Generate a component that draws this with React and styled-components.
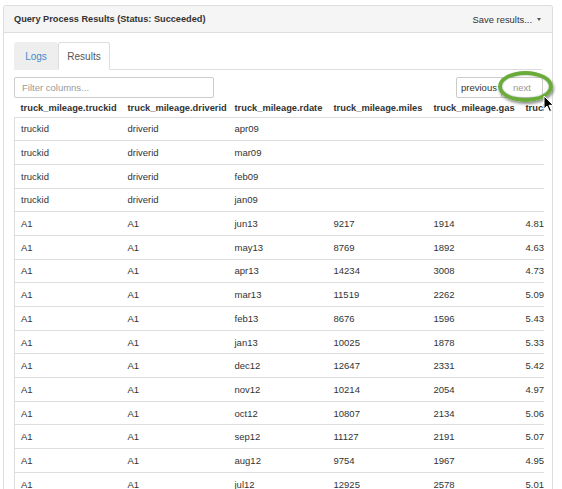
import React from "react";
import styled, { createGlobalStyle } from "styled-components";

const Global = createGlobalStyle`
  html, body { margin: 0; padding: 0; background: #fff; }
  body { font-family: "Liberation Sans", Arial, sans-serif; color: #333; overflow: hidden; }
  * { box-sizing: border-box; }
`;

const Panel = styled.div`
  margin: 5px 0 0 3px;
  width: 550px;
  height: 500px;
  border: 1px solid #ddd;
  border-bottom: none;
  border-radius: 3px 3px 0 0;
  background: #fff;
`;

const PanelHeader = styled.div`
  height: 27px;
  display: flex;
  align-items: center;
  justify-content: space-between;
  padding: 0 10px;
  background: #f5f5f5;
  border-bottom: 1px solid #ddd;
  border-radius: 3px 3px 0 0;
`;

const Title = styled.div`
  font-weight: bold;
  font-size: 9.2px;
  color: #333;
`;

const SaveMenu = styled.div`
  font-size: 9.4px;
  color: #333;
  display: flex;
  align-items: center;
  gap: 5px;
  padding-right: 1px;
`;

const Caret = styled.span`
  width: 0;
  height: 0;
  border-left: 2.5px solid transparent;
  border-right: 2.5px solid transparent;
  border-top: 3px solid #555;
`;

const PanelBody = styled.div`
  padding: 9px 10px 0 10px;
`;

const TabBar = styled.div`
  display: flex;
  height: 28px;
  border-bottom: 1px solid #ddd;
`;

const Tab = styled.div`
  display: flex;
  align-items: center;
  justify-content: center;
  font-size: 10px;
  height: 28px;
  color: ${(p) => (p.$active ? "#555" : "#428bca")};
  background: ${(p) => (p.$active ? "#fff" : "#eee")};
  border: 1px solid ${(p) => (p.$active ? "#ddd" : "#eee")};
  border-bottom-color: ${(p) => (p.$active ? "#fff" : "transparent")};
  border-radius: 3px 3px 0 0;
  margin-bottom: -1px;
  width: ${(p) => p.$w}px;
`;

const Toolbar = styled.div`
  display: flex;
  justify-content: space-between;
  align-items: center;
  margin-top: 7px;
  margin-right: -1px;
  position: relative;
`;

const Filter = styled.input`
  width: 200px;
  height: 21px;
  border: 1px solid #ccc;
  border-radius: 2px;
  padding: 0 7px;
  font-family: "Liberation Sans", Arial, sans-serif;
  font-size: 9.5px;
  color: #555;
  outline: none;
  &::placeholder { color: #999; }
`;

const Pager = styled.div`
  display: flex;
`;

const PageButton = styled.button`
  height: 21px;
  border: 1px solid #ccc;
  background: #fff;
  font-family: "Liberation Sans", Arial, sans-serif;
  font-size: 9.5px;
  color: ${(p) => (p.$disabled ? "#999" : "#333")};
  padding: 0;
  margin-left: ${(p) => (p.$joined ? "-1px" : "0")};
  border-radius: ${(p) => (p.$joined ? "0 2px 2px 0" : "2px 0 0 2px")};
  width: ${(p) => p.$w}px;
`;

const Highlight = styled.div`
  position: absolute;
  right: -10px;
  top: -6px;
  width: 55px;
  height: 31px;
  border: 4px solid #6aab3a;
  border-radius: 50%;
  box-shadow: 1px 2px 3px rgba(0,0,0,0.45), inset 0 0 2px rgba(0,0,0,0.35);
  pointer-events: none;
`;

const Cursor = styled.svg`
  position: absolute;
  right: -12px;
  top: 18px;
`;

const TableWrap = styled.div`
  width: 530px;
  overflow: hidden;
`;

const Table = styled.table`
  border-collapse: collapse;
  table-layout: fixed;
  width: 640px;
`;

const Th = styled.th`
  text-align: left;
  font-size: 9.3px;
  font-weight: bold;
  color: #333;
  height: 19px;
  padding: 2px 6px 0 6px;
  white-space: nowrap;
  overflow: hidden;
  vertical-align: middle;
`;

const Td = styled.td`
  font-size: 9.5px;
  color: #333;
  height: 23.7px;
  padding: 0 6px;
  border-top: 1px solid #ddd;
  white-space: nowrap;
  overflow: hidden;
  vertical-align: middle;
`;

const FirstTd = styled(Td)`
  border-left: 1px solid #ddd;
`;

const cols = [
  { name: "truck_mileage.truckid", w: 107 },
  { name: "truck_mileage.driverid", w: 107 },
  { name: "truck_mileage.rdate", w: 99 },
  { name: "truck_mileage.miles", w: 100 },
  { name: "truck_mileage.gas", w: 92 },
  { name: "truck_mileage.mpg", w: 135 },
];

const rows = [
  ["truckid", "driverid", "apr09", "", "", ""],
  ["truckid", "driverid", "mar09", "", "", ""],
  ["truckid", "driverid", "feb09", "", "", ""],
  ["truckid", "driverid", "jan09", "", "", ""],
  ["A1", "A1", "jun13", "9217", "1914", "4.81"],
  ["A1", "A1", "may13", "8769", "1892", "4.63"],
  ["A1", "A1", "apr13", "14234", "3008", "4.73"],
  ["A1", "A1", "mar13", "11519", "2262", "5.09"],
  ["A1", "A1", "feb13", "8676", "1596", "5.43"],
  ["A1", "A1", "jan13", "10025", "1878", "5.33"],
  ["A1", "A1", "dec12", "12647", "2331", "5.42"],
  ["A1", "A1", "nov12", "10214", "2054", "4.97"],
  ["A1", "A1", "oct12", "10807", "2134", "5.06"],
  ["A1", "A1", "sep12", "11127", "2191", "5.07"],
  ["A1", "A1", "aug12", "9754", "1967", "4.95"],
  ["A1", "A1", "jul12", "12925", "2578", "5.01"],
];

export default function App() {
  return (
    <>
      <Global />
      <Panel>
        <PanelHeader>
          <Title>Query Process Results (Status: Succeeded)</Title>
          <SaveMenu>
            Save results...
            <Caret />
          </SaveMenu>
        </PanelHeader>
        <PanelBody>
          <TabBar>
            <Tab $w={44}>Logs</Tab>
            <Tab $active $w={52}>Results</Tab>
          </TabBar>
          <Toolbar>
            <Filter placeholder="Filter columns..." />
            <Pager>
              <PageButton $w={46}>previous</PageButton>
              <PageButton $joined $disabled $w={42}>next</PageButton>
            </Pager>
            <Highlight />
            <Cursor width="12" height="18" viewBox="0 0 12 18">
              <path d="M1 1 L1 14 L4 11 L6.5 16.5 L8.5 15.6 L6 10.3 L10.3 10.3 Z" fill="#000" stroke="#fff" strokeWidth="1" />
            </Cursor>
          </Toolbar>
          <TableWrap>
            <Table>
              <colgroup>
                {cols.map((c) => (
                  <col key={c.name} style={{ width: c.w }} />
                ))}
              </colgroup>
              <thead>
                <tr>
                  {cols.map((c) => (
                    <Th key={c.name}>{c.name}</Th>
                  ))}
                </tr>
              </thead>
              <tbody>
                {rows.map((r, i) => (
                  <tr key={i}>
                    {r.map((v, j) =>
                      j === 0 ? <FirstTd key={j}>{v}</FirstTd> : <Td key={j}>{v}</Td>
                    )}
                  </tr>
                ))}
              </tbody>
            </Table>
          </TableWrap>
        </PanelBody>
      </Panel>
    </>
  );
}
